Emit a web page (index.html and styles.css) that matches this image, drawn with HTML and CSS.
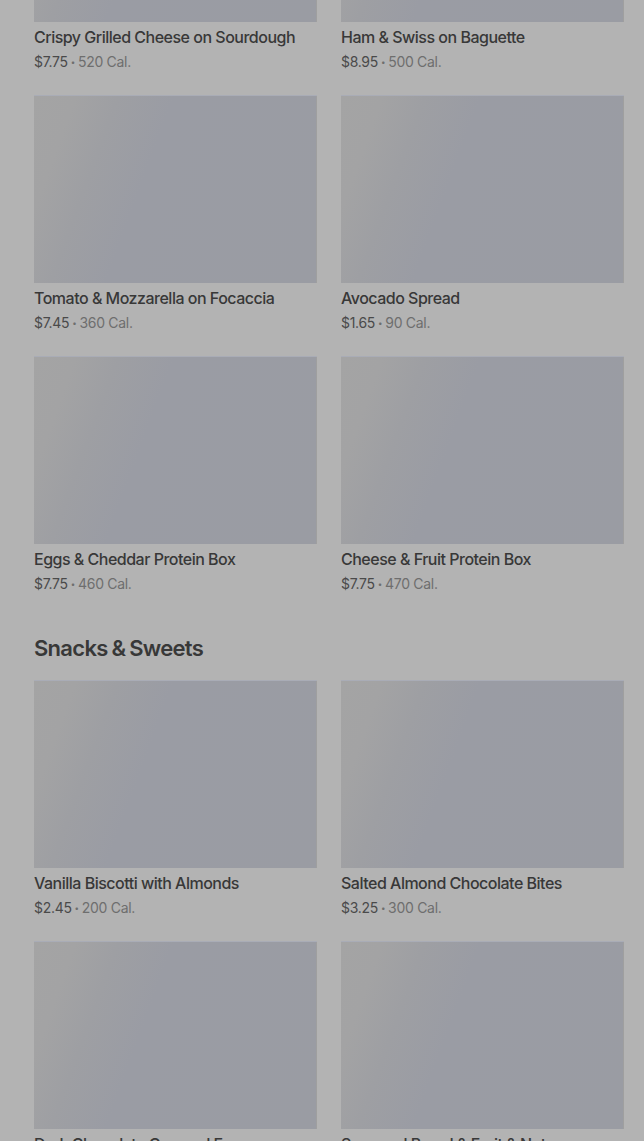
FILE: index.html
```html
<!DOCTYPE html>
<html lang="en">
<head>
    <meta charset="UTF-8">
    <meta name="viewport" content="width=device-width, initial-scale=1.0">
    <title>Menu</title>
    <link rel="stylesheet" href="styles.css">
</head>
<body>
    <div class="menu">
        <section class="section">
            <div class="grid">
                <div class="item">
                    <div class="thumb"></div>
                    <div class="name">Crispy Grilled Cheese on Sourdough</div>
                    <div class="meta"><span class="price">$7.75</span><span class="dot">•</span>520 Cal.</div>
                </div>
                <div class="item">
                    <div class="thumb"></div>
                    <div class="name">Ham &amp; Swiss on Baguette</div>
                    <div class="meta"><span class="price">$8.95</span><span class="dot">•</span>500 Cal.</div>
                </div>
                <div class="item">
                    <div class="thumb"></div>
                    <div class="name">Tomato &amp; Mozzarella on Focaccia</div>
                    <div class="meta"><span class="price">$7.45</span><span class="dot">•</span>360 Cal.</div>
                </div>
                <div class="item">
                    <div class="thumb"></div>
                    <div class="name">Avocado Spread</div>
                    <div class="meta"><span class="price">$1.65</span><span class="dot">•</span>90 Cal.</div>
                </div>
                <div class="item">
                    <div class="thumb"></div>
                    <div class="name">Eggs &amp; Cheddar Protein Box</div>
                    <div class="meta"><span class="price">$7.75</span><span class="dot">•</span>460 Cal.</div>
                </div>
                <div class="item">
                    <div class="thumb"></div>
                    <div class="name">Cheese &amp; Fruit Protein Box</div>
                    <div class="meta"><span class="price">$7.75</span><span class="dot">•</span>470 Cal.</div>
                </div>
            </div>
        </section>

        <section class="section">
            <h2>Snacks &amp; Sweets</h2>
            <div class="grid">
                <div class="item">
                    <div class="thumb"></div>
                    <div class="name">Vanilla Biscotti with Almonds</div>
                    <div class="meta"><span class="price">$2.45</span><span class="dot">•</span>200 Cal.</div>
                </div>
                <div class="item">
                    <div class="thumb"></div>
                    <div class="name">Salted Almond Chocolate Bites</div>
                    <div class="meta"><span class="price">$3.25</span><span class="dot">•</span>300 Cal.</div>
                </div>
                <div class="item">
                    <div class="thumb"></div>
                    <div class="name">Dark Chocolate Covered Espresso</div>
                    <div class="meta"><span class="price">$2.95</span><span class="dot">•</span>210 Cal.</div>
                </div>
                <div class="item">
                    <div class="thumb"></div>
                    <div class="name">Seasonal Bread &amp; Fruit &amp; Nut</div>
                    <div class="meta"><span class="price">$3.45</span><span class="dot">•</span>280 Cal.</div>
                </div>
            </div>
        </section>
    </div>
</body>
</html>
```

FILE: styles.css
```css
html, body {
    margin: 0;
    height: 100%;
    overflow: hidden;
}
body {
    font-family: Inter, "Liberation Sans", sans-serif;
    background: #b3b3b3;
    color: #333;
}
.menu {
    /* page is scrolled: first row of pictures is cut off */
    margin-top: -166px;
    padding: 0 20px 0 34px;
}
.section h2 {
    margin: 40px 0 18px;
    font-size: 22px;
    line-height: 28px;
    font-weight: 600;
    letter-spacing: -0.7px;
    word-spacing: -1px;
    color: #383838;
}
.grid {
    display: grid;
    grid-template-columns: minmax(0, 1fr) minmax(0, 1fr);
    column-gap: 24px;
    row-gap: 23px;
}
.item {
    min-width: 0;
}
.thumb {
    height: 188px;
    background: linear-gradient(110deg, #a4a4a4 0%, #a3a3a4 12%, #9e9fa3 24%, #9a9ca4 40%, #9a9ca3 100%);
    box-shadow: inset 0 1px 0 #a9acb6, inset -1px 0 0 #9f9f9f;
}
.name {
    margin-top: 5px;
    font-size: 16px;
    line-height: 20px;
    font-weight: 500;
    letter-spacing: -0.5px;
    color: #383838;
    white-space: nowrap;
    overflow: hidden;
}
.meta {
    margin-top: 5px;
    font-size: 14px;
    line-height: 20px;
    font-weight: 400;
    color: #6e6e6e;
    letter-spacing: -0.3px;
}
.price {
    color: #4a4a4a;
}
.dot {
    display: inline-block;
    margin: 0 3px;
    font-size: 8px;
    vertical-align: 2px;
}
```
